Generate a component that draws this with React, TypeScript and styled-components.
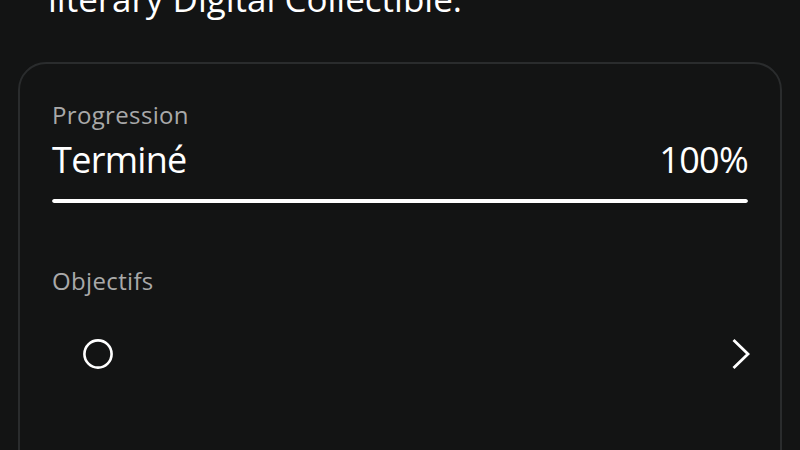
import React from "react"
import styled, { createGlobalStyle } from "styled-components"

const GlobalStyle = createGlobalStyle`
  html, body {
    margin: 0;
    padding: 0;
    background: #131414;
    overflow: hidden;
  }
  body {
    font-family: "Open Sans", "Noto Sans", sans-serif;
    color: #ffffff;
  }
`

const Page = styled.div`
  width: 800px;
  height: 450px;
  box-sizing: border-box;
  padding: 0 18px;
  overflow: hidden;
`

const Title = styled.h1`
  margin: -21px 0 0 30px;
  font-size: 35px;
  line-height: 40px;
  font-weight: 400;
  color: #ffffff;
`

const Card = styled.section`
  margin-top: 43px;
  border: 2px solid #2a2c2d;
  border-radius: 28px;
  padding: 35px 32px 120px;
`

const Label = styled.div<{ $gap?: number }>`
  margin-top: ${(p) => p.$gap ?? 0}px;
  font-size: 24px;
  line-height: 32px;
  letter-spacing: 0.35px;
  color: #a9a9a9;
`

const StatusRow = styled.div`
  margin-top: 7px;
  display: flex;
  justify-content: space-between;
  align-items: baseline;
  font-size: 36px;
  line-height: 44px;
  letter-spacing: -0.7px;
  color: #ffffff;
`

const Track = styled.div`
  margin-top: 17px;
  height: 4px;
  border-radius: 2px;
  background: #3a3c3d;
  overflow: hidden;
`

const Fill = styled.div`
  height: 100%;
  border-radius: 2px;
  background: #ffffff;
`

const ObjectiveRow = styled.div`
  margin-top: 22px;
  height: 70px;
  display: flex;
  align-items: center;
  justify-content: space-between;
  padding-left: 31px;
  margin-right: -3px;
`

const Circle = () => (
  <svg width="30" height="30" viewBox="0 0 30 30">
    <circle cx="15" cy="15" r="13.6" fill="none" stroke="#ffffff" strokeWidth="2.6" />
  </svg>
)

const Chevron = () => (
  <svg width="20" height="32" viewBox="0 0 20 32">
    <path d="M2.5 2 L17 16 L2.5 30" fill="none" stroke="#ffffff" strokeWidth="2.8" strokeLinecap="butt" strokeLinejoin="miter" />
  </svg>
)

export default function App() {
  const progress = 100
  return (
    <>
      <GlobalStyle />
      <Page>
        <Title>literary Digital Collectible.</Title>
        <Card>
          <Label>Progression</Label>
          <StatusRow>
            <span>Terminé</span>
            <span>{progress}%</span>
          </StatusRow>
          <Track>
            <Fill style={{ width: `${progress}%` }} />
          </Track>
          <Label $gap={62}>Objectifs</Label>
          <ObjectiveRow>
            <Circle />
            <Chevron />
          </ObjectiveRow>
        </Card>
      </Page>
    </>
  )
}
